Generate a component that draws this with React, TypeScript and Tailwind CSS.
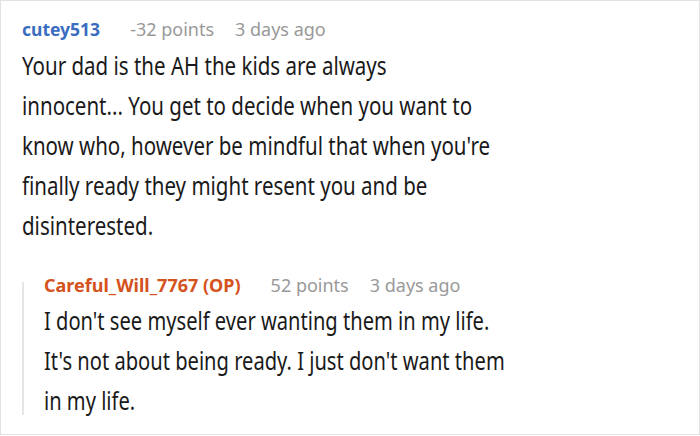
export default function App() {
  return (
    <div className="w-[700px] h-[436px] bg-white">
      <div
        className="w-[700px] h-[435px] border border-[#e2e2e2] pl-[21px] pt-[16px]"
        style={{ fontFamily: '"Noto Sans", sans-serif' }}
      >
        <div className="flex items-baseline text-[18px] leading-[25px]">
          <span className="font-bold text-[17.5px] text-[#3a6cc0]">cutey513</span>
          <span className="ml-[30px] text-[#999999]">-32 points</span>
          <span className="ml-[21px] text-[#999999]">3 days ago</span>
        </div>
        <p className="mt-[3px] w-[620px] whitespace-nowrap origin-left scale-x-[0.82] text-[25px] leading-[40px] text-[#1a1a1a]">
          Your dad is the AH the kids are always
          <br />
          innocent... You get to decide when you want to
          <br />
          know who, however be mindful that when you're
          <br />
          finally ready they might resent you and be
          <br />
          disinterested.
        </p>
        <div className="mt-[28px] flex">
          <div className="w-[2px] bg-[#e6e6e6] mt-[9px] mb-[5px]" />
          <div className="pl-[20px]">
            <div className="flex items-baseline text-[18px] leading-[24px]">
              <span className="font-bold text-[#d4521c]">Careful_Will_7767 (OP)</span>
              <span className="ml-[30px] text-[#999999]">52 points</span>
              <span className="ml-[21px] text-[#999999]">3 days ago</span>
            </div>
            <p className="mt-[3px] w-[600px] whitespace-nowrap origin-left scale-x-[0.805] text-[25px] leading-[40px] text-[#1a1a1a]">
              I don't see myself ever wanting them in my life.
              <br />
              It's not about being ready. I just don't want them
              <br />
              in my life.
            </p>
          </div>
        </div>
      </div>
    </div>
  );
}
